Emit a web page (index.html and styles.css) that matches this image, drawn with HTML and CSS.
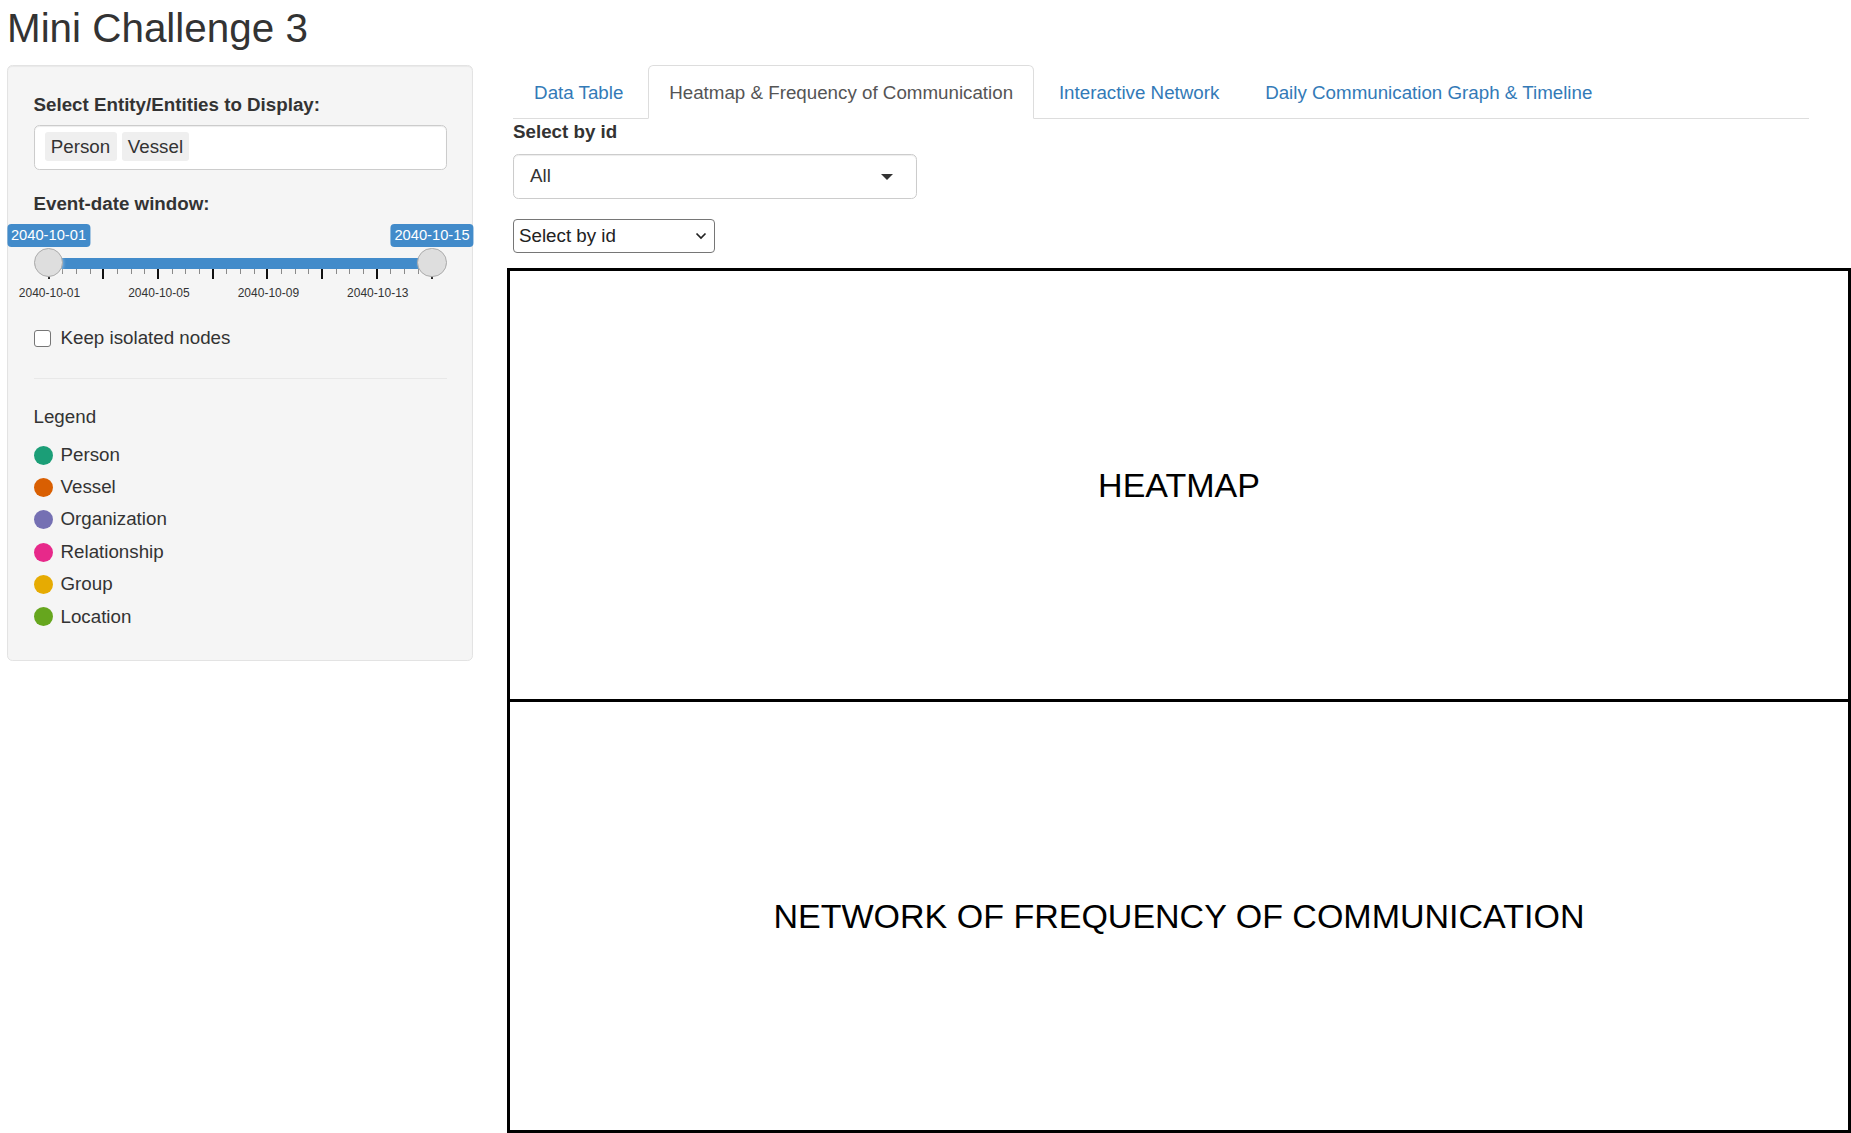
FILE: index.html
```html
<!DOCTYPE html>
<html lang="en">
<head>
<meta charset="utf-8">
<title>Mini Challenge 3</title>
<link rel="stylesheet" href="styles.css">
</head>
<body>
<h2 class="title">Mini Challenge 3</h2>
<div class="layout">
  <aside class="well">
    <div class="form-group">
      <label class="control-label">Select Entity/Entities to Display:</label>
      <div class="sel-multi">
        <span class="chip">Person</span>
        <span class="chip">Vessel</span>
      </div>
    </div>
    <div class="form-group">
      <label class="control-label">Event-date window:</label>
      <div class="irs">
        <div class="irs-line"></div>
        <div class="irs-bar"></div>
        <div class="grid">
          <span class="pol big" style="left:15px"></span>
          <span class="pol" style="left:28.68px"></span>
          <span class="pol" style="left:42.36px"></span>
          <span class="pol" style="left:56.04px"></span>
          <span class="pol big" style="left:69.71px"></span>
          <span class="pol" style="left:83.39px"></span>
          <span class="pol" style="left:97.07px"></span>
          <span class="pol" style="left:110.75px"></span>
          <span class="pol big" style="left:124.43px"></span>
          <span class="pol" style="left:138.11px"></span>
          <span class="pol" style="left:151.79px"></span>
          <span class="pol" style="left:165.46px"></span>
          <span class="pol big" style="left:179.14px"></span>
          <span class="pol" style="left:192.82px"></span>
          <span class="pol" style="left:206.5px"></span>
          <span class="pol" style="left:220.18px"></span>
          <span class="pol big" style="left:233.86px"></span>
          <span class="pol" style="left:247.54px"></span>
          <span class="pol" style="left:261.21px"></span>
          <span class="pol" style="left:274.89px"></span>
          <span class="pol big" style="left:288.57px"></span>
          <span class="pol" style="left:302.25px"></span>
          <span class="pol" style="left:315.93px"></span>
          <span class="pol" style="left:329.61px"></span>
          <span class="pol big" style="left:343.29px"></span>
          <span class="pol" style="left:356.96px"></span>
          <span class="pol" style="left:370.64px"></span>
          <span class="pol" style="left:384.32px"></span>
          <span class="pol big" style="left:398px"></span>
          <span class="grid-text" style="left:16px">2040-10-01</span>
          <span class="grid-text" style="left:125.4px">2040-10-05</span>
          <span class="grid-text" style="left:234.9px">2040-10-09</span>
          <span class="grid-text" style="left:344.3px">2040-10-13</span>
        </div>
        <span class="handle from"></span>
        <span class="handle to"></span>
        <span class="badge from-label">2040-10-01</span>
        <span class="badge to-label">2040-10-15</span>
      </div>
    </div>
    <div class="form-group">
      <label class="check"><span class="box"></span><span>Keep isolated nodes</span></label>
    </div>
    <hr class="sep">
    <div class="legend-title">Legend</div>
    <div class="legend-item"><span class="dot person"></span>Person</div>
    <div class="legend-item"><span class="dot vessel"></span>Vessel</div>
    <div class="legend-item"><span class="dot org"></span>Organization</div>
    <div class="legend-item"><span class="dot rel"></span>Relationship</div>
    <div class="legend-item"><span class="dot group"></span>Group</div>
    <div class="legend-item"><span class="dot loc"></span>Location</div>
  </aside>
  <main class="main">
    <ul class="tabs">
      <li class="tab"><a href="#">Data Table</a></li>
      <li class="tab active"><a href="#">Heatmap &amp; Frequency of Communication</a></li>
      <li class="tab"><a href="#">Interactive Network</a></li>
      <li class="tab"><a href="#">Daily Communication Graph &amp; Timeline</a></li>
    </ul>
    <label class="field-label">Select by id</label>
    <div class="sel-single"><span>All</span><span class="caret"></span></div>
    <div class="sel-native">
      <span>Select by id</span>
      <svg class="chev" width="12" height="8" viewBox="0 0 12 8"><polyline points="1.5,1.5 6,6 10.5,1.5" fill="none" stroke="#222" stroke-width="1.7"/></svg>
    </div>
    <div class="plots">
      <div class="plot">HEATMAP</div>
      <div class="plot">NETWORK OF FREQUENCY OF COMMUNICATION</div>
    </div>
  </main>
</div>
</body>
</html>
```
FILE: styles.css
```css
html, body {
  overflow: hidden;
}

body {
  margin: 0;
  font-family: "Liberation Sans", Arial, Helvetica, sans-serif;
  font-size: 18.75px;
  line-height: 26.8px;
  color: #333;
  background: #fff;
}

.title {
  margin: 6px 0 15px 7px;
  font-size: 40.4px;
  line-height: 44px;
  font-weight: 500;
}

.layout {
  display: grid;
  grid-template-columns: 466px 1fr;
  column-gap: 40px;
  padding-left: 7px;
  align-items: start;
}

/* Sidebar well */
.well {
  background: #f5f5f5;
  border: 1px solid #e3e3e3;
  border-radius: 5.4px;
  box-shadow: inset 0 1px 1px rgba(0, 0, 0, 0.05);
  padding: 25.5px 25.5px 24.5px;
}

.form-group {
  margin-bottom: 20.6px;
}

.control-label {
  display: block;
  font-weight: 700;
  margin-bottom: 6.9px;
}

.sel-multi {
  height: 45px;
  box-sizing: border-box;
  border: 1px solid #ccc;
  border-radius: 5.4px;
  background: #fff;
  box-shadow: inset 0 1px 1px rgba(0, 0, 0, 0.075);
  padding: 6px 10px;
  display: flex;
  gap: 5px;
  align-items: flex-start;
}

.chip {
  background: #efefef;
  border-radius: 3px;
  padding: 0 6.3px;
  height: 29px;
  line-height: 29px;
}

/* Range slider */
.irs {
  position: relative;
  height: 80.2px;
}

.irs-line {
  position: absolute;
  left: 0;
  right: 0;
  top: 33.5px;
  height: 10.7px;
  box-sizing: border-box;
  background: #ededed;
  border: 1px solid #ccc;
  border-radius: 8px;
}

.irs-bar {
  position: absolute;
  left: 15px;
  right: 15px;
  top: 33.5px;
  height: 10.7px;
  background: #428bca;
}

.grid {
  position: absolute;
  left: 0;
  right: 0;
  top: 44.3px;
  height: 36px;
}

.pol {
  position: absolute;
  top: 0;
  width: 1px;
  height: 5.4px;
  background: #8a8a8a;
}

.pol.big {
  width: 2px;
  height: 10.7px;
  margin-left: -1px;
  background: #111;
}

.grid-text {
  position: absolute;
  top: 17.2px;
  transform: translateX(-50%);
  font-size: 12px;
  line-height: 14px;
  color: #333;
  white-space: nowrap;
}

.handle {
  position: absolute;
  top: 23.3px;
  width: 29.5px;
  height: 29.5px;
  box-sizing: border-box;
  background: #dedede;
  border: 1px solid #ababab;
  border-radius: 50%;
  box-shadow: 1px 1px 3px rgba(255, 255, 255, 0.3);
}

.handle.from {
  left: 0;
}

.handle.to {
  right: 0;
}

.badge {
  position: absolute;
  top: 0;
  transform: translateX(-50%);
  background: #428bca;
  color: #fff;
  font-size: 14.7px;
  line-height: 19.6px;
  padding: 1.3px 4px;
  border-radius: 4px;
  white-space: nowrap;
}

.badge.from-label {
  left: 15px;
}

.badge.to-label {
  left: 398.5px;
}

/* Checkbox */
.check {
  display: flex;
  align-items: center;
  gap: 9.5px;
  height: 26.8px;
}

.box {
  width: 17.5px;
  height: 17.5px;
  box-sizing: border-box;
  border: 1px solid #767676;
  border-radius: 3px;
  background: #fff;
}

.sep {
  border: 0;
  border-top: 1px solid #e8e8e8;
  margin: 26.3px 0 25px;
}

.legend-title {
  margin-bottom: 10.5px;
}

.legend-item {
  display: flex;
  align-items: center;
  gap: 8px;
  height: 26.8px;
  margin-bottom: 5.6px;
}

.dot {
  width: 19px;
  height: 19px;
  border-radius: 50%;
}

.dot.person { background: #1b9e77; }
.dot.vessel { background: #d95f02; }
.dot.org { background: #7570b3; }
.dot.rel { background: #e7298a; }
.dot.group { background: #e6ab02; }
.dot.loc { background: #66a61e; }

/* Main panel */
.main {
  min-width: 0;
}

.tabs {
  display: flex;
  list-style: none;
  margin: 0;
  padding: 0;
  width: 1296px;
  border-bottom: 1px solid #ddd;
}

.tab {
  margin-bottom: -1px;
  margin-right: 3.6px;
}

.tab a {
  display: block;
  padding: 14.2px 20.1px 10.6px;
  border: 1px solid transparent;
  border-radius: 5.4px 5.4px 0 0;
  color: #337ab7;
  text-decoration: none;
}

.tab.active a {
  color: #555;
  background: #fff;
  border-color: #ddd #ddd transparent;
}

.field-label {
  display: block;
  font-weight: 700;
  margin-bottom: 8.5px;
}

.sel-single {
  width: 404px;
  height: 45px;
  box-sizing: border-box;
  border: 1px solid #ccc;
  border-radius: 5.4px;
  background: #fff;
  box-shadow: inset 0 1px 1px rgba(0, 0, 0, 0.075);
  display: flex;
  align-items: center;
  justify-content: space-between;
  padding: 0 23px 0 16px;
  margin-bottom: 20px;
}

.caret {
  width: 0;
  height: 0;
  border-left: 6.5px solid transparent;
  border-right: 6.5px solid transparent;
  border-top: 6.5px solid #333;
  margin-top: 1px;
}

.sel-native {
  width: 202px;
  height: 34.5px;
  box-sizing: border-box;
  border: 1px solid #767676;
  border-radius: 4px;
  background: #fff;
  color: #222;
  display: flex;
  align-items: center;
  justify-content: space-between;
  padding: 0 7px 0 5px;
}

.plots {
  margin: 15px 0 0 -6px;
  border: 3px solid #000;
}

.plot {
  height: 428px;
  display: flex;
  align-items: center;
  justify-content: center;
  font-size: 34px;
  line-height: 40px;
  color: #000;
}

.plot + .plot {
  height: 428px;
  border-top: 3px solid #000;
}
```
